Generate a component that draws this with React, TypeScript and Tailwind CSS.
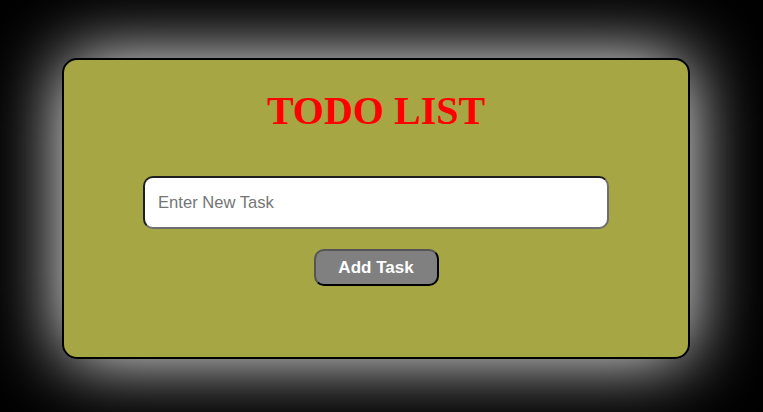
import React from "react";

export default function App() {
  return (
    <div className="w-[763px] h-[412px] bg-black overflow-hidden pt-[58px] pl-[62px]">
      <div className="w-[628px] h-[301px] bg-[#a6a644] border-2 border-black rounded-[15px] shadow-[0_0_75px_white] flex flex-col items-center pt-[28px]">
        <h1 className="font-['Liberation_Serif','Times_New_Roman',serif] text-[40px] leading-[46px] font-bold text-[#ff0000]">
          TODO LIST
        </h1>
        <input
          type="text"
          placeholder="Enter New Task"
          className="font-['Liberation_Sans',Arial,sans-serif] mt-[42px] w-[466px] h-[53px] bg-white rounded-[10px] border-2 border-t-[#1e1e1e] border-l-[#1e1e1e] border-b-[#6e6e6e] border-r-[#6e6e6e] pl-[13px] text-[16.6px] placeholder:text-[#757575] outline-none"
        />
        <button className="font-['Liberation_Sans',Arial,sans-serif] mt-[20px] w-[125px] h-[37px] bg-[#808080] rounded-[10px] border-2 border-t-[#555555] border-l-[#555555] border-b-black border-r-black text-white font-bold text-[17px]">
          Add Task
        </button>
      </div>
    </div>
  );
}
